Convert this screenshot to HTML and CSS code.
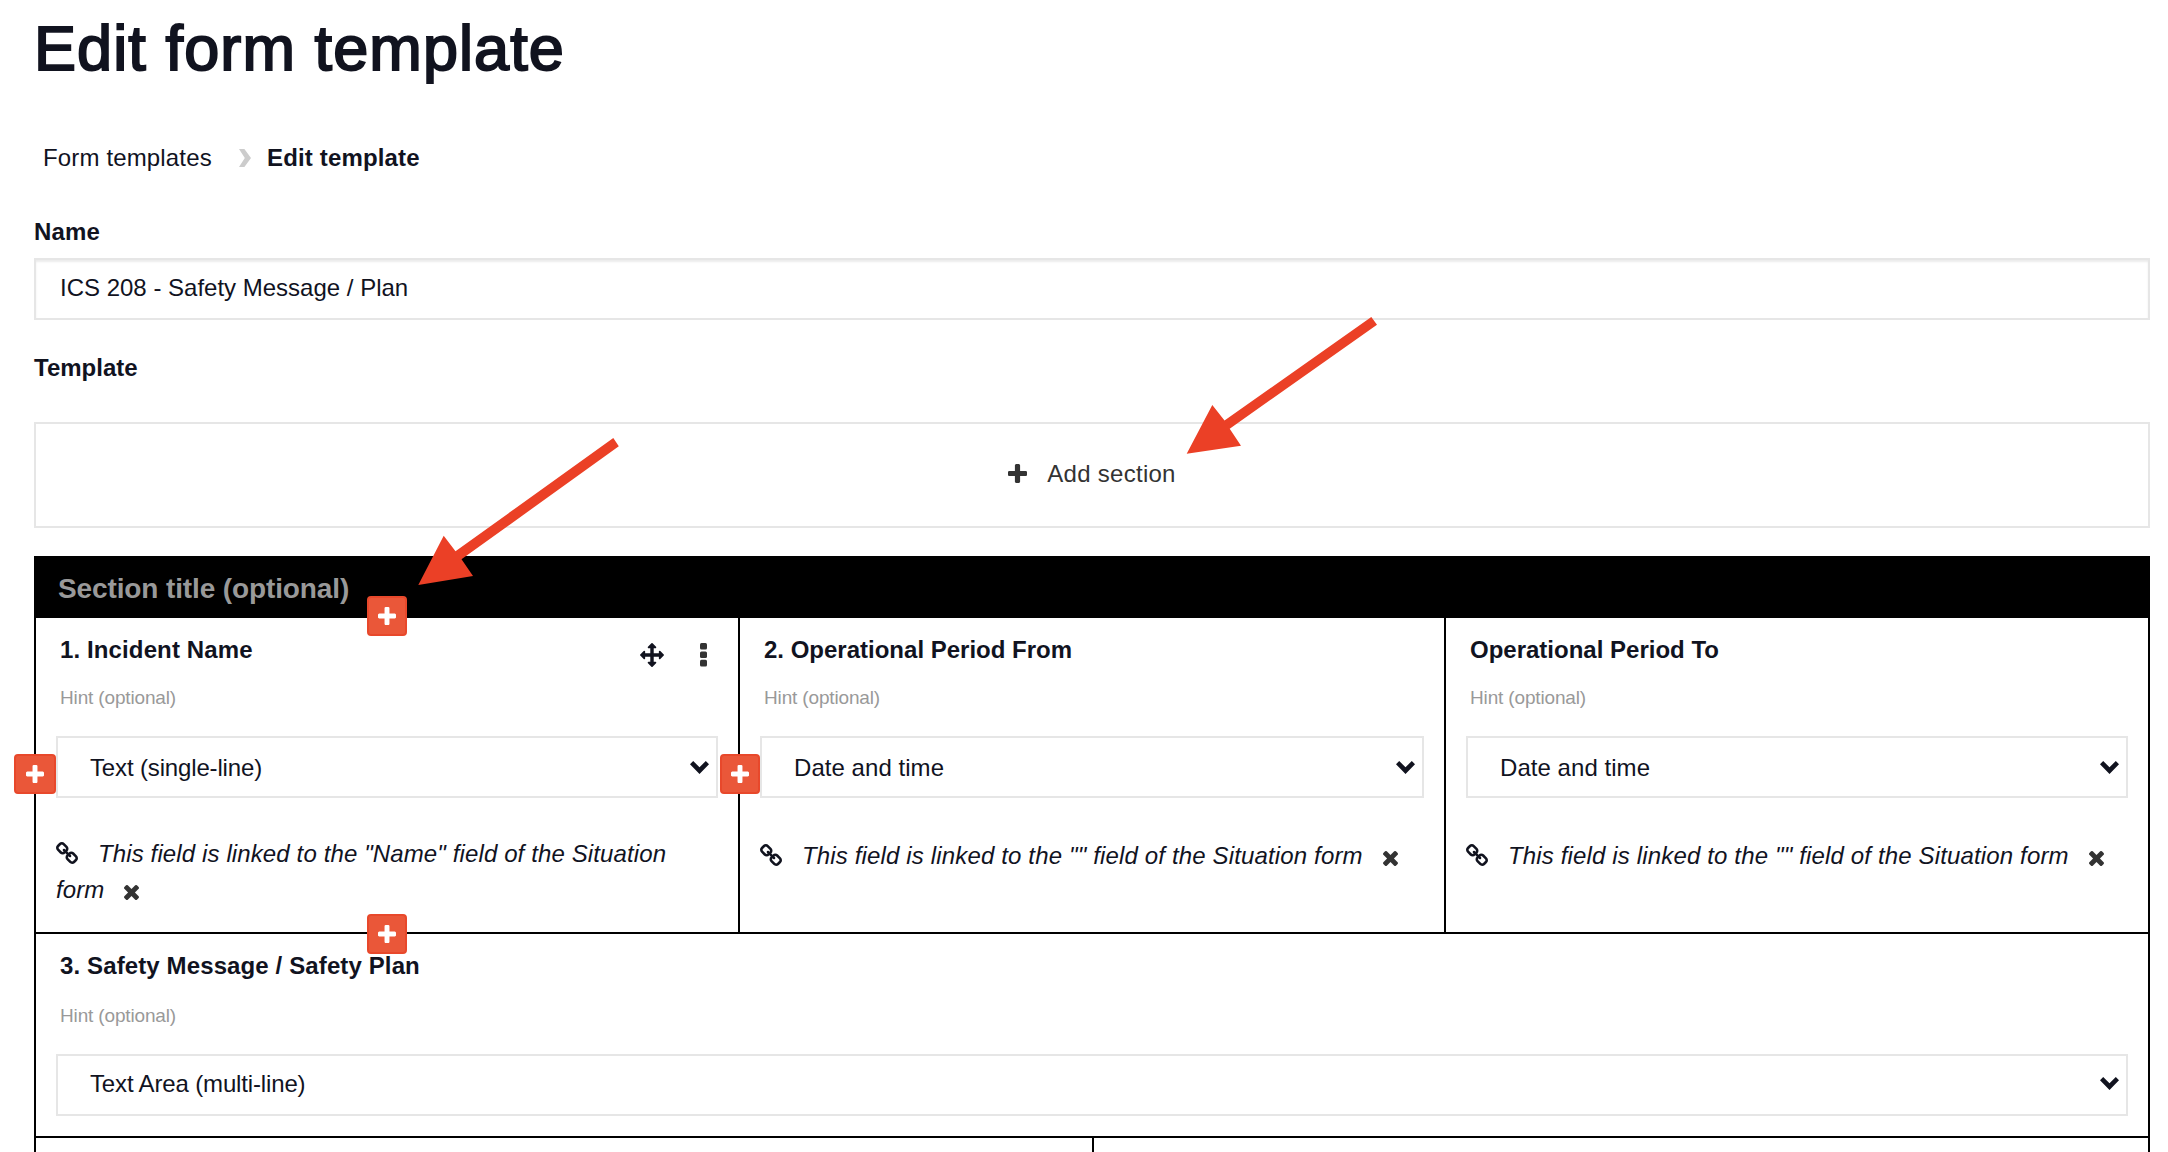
FILE: index.html
```
<!DOCTYPE html>
<html lang="en">
<head>
<meta charset="utf-8">
<title>Edit form template</title>
<link rel="stylesheet" href="styles.css">
</head>
<body>
<svg class="sprite" aria-hidden="true">
  <symbol id="plus" viewBox="192 128 1408 1408"><path d="M1600 736v192q0 40-28 68t-68 28h-416v416q0 40-28 68t-68 28h-192q-40 0-68-28t-28-68v-416h-416q-40 0-68-28t-28-68v-192q0-40 28-68t68-28h416v-416q0-40 28-68t68-28h192q40 0 68 28t28 68v416h416q40 0 68 28t28 68z"/></symbol>
  <symbol id="times" viewBox="302 366 1188 1188"><path d="M1490 1322q0 40-28 68l-136 136q-28 28-68 28t-68-28l-294-294-294 294q-28 28-68 28t-68-28l-136-136q-28-28-28-68t28-68l294-294-294-294q-28-28-28-68t28-68l136-136q28-28 68-28t68 28l294 294 294-294q28-28 68-28t68 28l136 136q28 28 28 68t-28 68l-294 294 294 294q28 28 28 68z"/></symbol>
  <symbol id="move" viewBox="0 0 1792 1792"><path d="M1792 896q0 26-19 45l-256 256q-19 19-45 19t-45-19-19-45v-128h-384v384h128q26 0 45 19t19 45-19 45l-256 256q-19 19-45 19t-45-19l-256-256q-19-19-19-45t19-45 45-19h128v-384h-384v128q0 26-19 45t-45 19-45-19l-256-256q-19-19-19-45t19-45l256-256q19-19 45-19t45 19 19 45v128h384v-384h-128q-26 0-45-19t-19-45 19-45l256-256q19-19 45-19t45 19l256 256q19 19 19 45t-19 45-45 19h-128v384h384v-128q0-26 19-45t45-19 45 19l256 256q19 19 19 45z"/></symbol>
  <symbol id="link" viewBox="80 16 1632 1632"><path d="M1520 1216q0-40-28-68l-208-208q-28-28-68-28-42 0-72 32 3 3 19 18.5t21.5 21.5 15 19 13 25.5 3.5 27.5q0 40-28 68t-68 28q-15 0-27.5-3.5t-25.5-13-19-15-21.5-21.5-18.5-19q-33 31-33 73 0 40 28 68l206 207q27 27 68 27 40 0 68-26l147-146q28-28 28-67zm-703-705q0-40-28-68l-206-207q-28-28-68-28-39 0-68 27l-147 146q-28 28-28 67 0 40 28 68l208 208q27 27 68 27 42 0 72-31-3-3-19-18.5t-21.5-21.5-15-19-13-25.5-3.5-27.5q0-40 28-68t68-28q15 0 27.5 3.5t25.5 13 19 15 21.5 21.5 18.5 19q33-31 33-73zm895 705q0 120-85 203l-147 146q-83 83-203 83-121 0-204-85l-206-207q-83-83-83-203 0-123 88-209l-88-88q-86 88-208 88-120 0-204-84l-208-208q-84-84-84-204t85-203l147-146q83-83 203-83 121 0 204 85l206 207q83 83 83 203 0 123-88 209l88 88q86-88 208-88 120 0 204 84l208 208q84 84 84 204z"/></symbol>
  <symbol id="down" viewBox="0 0 19 13"><path d="M0 3.2 3.2 0 9.5 6.2 15.8 0 19 3.2 9.5 13z"/></symbol>
  <symbol id="dots" viewBox="0 0 7 24"><rect width="7" height="6.6" rx="1.5"/><rect y="8.4" width="7" height="6.6" rx="1.5"/><rect y="16.8" width="7" height="6.6" rx="1.5"/></symbol>
</svg>

<main class="page">
  <h1 class="page-title">Edit form template</h1>

  <nav class="breadcrumb">
    <a class="crumb">Form templates</a>
    <svg class="crumb-sep" viewBox="0 0 12 18"><path d="M0 0h5.400L12 9l-6.600 9H0l5.800-9z"/></svg>
    <span class="crumb-current">Edit template</span>
  </nav>

  <label class="label" for="name">Name</label>
  <input class="text-input" id="name" type="text" value="ICS 208 - Safety Message / Plan">

  <div class="label label-template">Template</div>
  <div class="add-section"><svg class="add-icon"><use href="#plus"/></svg><span>Add section</span></div>

  <section class="section">
    <header class="section-head">Section title (optional)</header>

    <div class="row row-three">
      <div class="cell">
        <div class="cell-head">
          <span class="cell-title">1. Incident Name</span>
          <span class="cell-tools"><svg class="move"><use href="#move"/></svg><svg class="dots"><use href="#dots"/></svg></span>
        </div>
        <div class="hint">Hint (optional)</div>
        <div class="select"><span class="select-tight">Text (single-line)</span><svg class="down"><use href="#down"/></svg></div>
        <p class="linked"><svg class="link"><use href="#link"/></svg>This field is linked to the "Name" field of the Situation form<svg class="times"><use href="#times"/></svg></p>
        <button class="add add-top"><svg><use href="#plus"/></svg></button>
        <button class="add add-left"><svg><use href="#plus"/></svg></button>
        <button class="add add-right"><svg><use href="#plus"/></svg></button>
        <button class="add add-bottom"><svg><use href="#plus"/></svg></button>
      </div>
      <div class="cell">
        <div class="cell-head"><span class="cell-title">2. Operational Period From</span></div>
        <div class="hint">Hint (optional)</div>
        <div class="select"><span>Date and time</span><svg class="down"><use href="#down"/></svg></div>
        <p class="linked linked-short"><svg class="link"><use href="#link"/></svg>This field is linked to the "" field of the Situation form<svg class="times"><use href="#times"/></svg></p>
      </div>
      <div class="cell">
        <div class="cell-head"><span class="cell-title">Operational Period To</span></div>
        <div class="hint">Hint (optional)</div>
        <div class="select"><span>Date and time</span><svg class="down"><use href="#down"/></svg></div>
        <p class="linked linked-short"><svg class="link"><use href="#link"/></svg>This field is linked to the "" field of the Situation form<svg class="times"><use href="#times"/></svg></p>
      </div>
    </div>

    <div class="row row-one">
      <div class="cell">
        <div class="cell-head"><span class="cell-title">3. Safety Message / Safety Plan</span></div>
        <div class="hint">Hint (optional)</div>
        <div class="select"><span class="select-tight">Text Area (multi-line)</span><svg class="down"><use href="#down"/></svg></div>
      </div>
    </div>

    <div class="row row-two">
      <div class="cell"></div>
      <div class="cell"></div>
    </div>
  </section>
</main>

<svg class="callouts" viewBox="0 0 2168 1152">
  <path d="M613.300 438 618.800 446.300 461.500 559.300 473 576 418.300 585 443.700 535.700 455.500 551.300z"/>
  <path d="M1371.300 317 1377 324.700 1229.700 428.700 1241 445.700 1186.700 453.700 1212.300 405 1224.500 420.500z"/>
</svg>
</body>
</html>
```
FILE: styles.css
```
* { box-sizing: border-box; }

body {
  margin: 0;
  height: 1152px;
  overflow: hidden;
  position: relative;
  background: #fff;
  color: #11131f;
  font: 24px/36px "Liberation Sans", Arial, sans-serif;
  letter-spacing: 0.12px;
}

svg { display: block; fill: currentColor; }
.sprite { position: absolute; width: 0; height: 0; }

.page { padding: 0 18px 0 34px; }

.page-title {
  margin: 0;
  padding: 12px 0 0;
  height: 140px;
  font-size: 63px;
  line-height: 72px;
  font-weight: 400;
  letter-spacing: 1.1px;
  -webkit-text-stroke: 2px currentColor;
}

.breadcrumb {
  display: flex;
  align-items: flex-start;
  height: 74px;
  padding-left: 9px;
  letter-spacing: 0.15px;
}
.crumb { width: 197px; }
.crumb-sep { width: 12px; height: 18px; margin: 9px 16px 0 -1px; color: #ccc; }
.crumb-current { font-weight: 700; }

.label { display: block; height: 44px; font-weight: 700; }
.label-template { height: 72px; margin-top: 30px; letter-spacing: 0; }

.text-input {
  display: block;
  width: 100%;
  height: 62px;
  padding: 0 24px 2px;
  border: 2px solid #e6e6e6;
  border-radius: 0;
  box-shadow: inset 0 2px 2px #ececec;
  outline: 0;
  font: inherit;
  letter-spacing: 0;
  color: inherit;
}

.add-section {
  display: flex;
  justify-content: center;
  align-items: center;
  gap: 20px;
  height: 106px;
  padding-bottom: 3px;
  border: 2px solid #e6e6e6;
  color: #333;
  letter-spacing: 0.28px;
}
.add-icon { width: 19px; height: 19px; }

.section { margin-top: 28px; border: solid #000; border-width: 0 2px; }
.section-head {
  height: 62px;
  margin: 0 -2px;
  padding: 15px 24px 0;
  background: #000;
  color: #999;
  font-size: 28px;
  font-weight: 700;
  letter-spacing: -0.12px;
}

.row { display: grid; border-bottom: 2px solid #000; }
.row-three { grid-template-columns: 704px 706px 702px; height: 316px; }
.row-one { height: 204px; }
.row-two { grid-template-columns: 1058px 1fr; height: 14px; border-bottom: 0; }

.cell { position: relative; padding: 14px 20px 0; border-right: 2px solid #000; }
.cell:last-child { border-right: 0; }
.row-two .cell { padding: 0; }
.cell-head { display: flex; justify-content: space-between; height: 46px; padding-left: 4px; }
.cell-title { font-weight: 700; }
.cell + .cell .cell-title { letter-spacing: 0; }
.cell-tools { display: flex; gap: 36px; padding: 11px 11px 0 0; }
.move { width: 24px; height: 24px; }
.dots { width: 7px; height: 24px; color: #333; }
.hint { height: 58px; padding: 2px 0 0 4px; font-size: 19px; color: #999; letter-spacing: -0.15px; }
.row-one .hint { height: 60px; padding-top: 4px; }

.select {
  display: flex;
  justify-content: space-between;
  height: 62px;
  padding: 12px 7px 0 32px;
  border: 2px solid #e6e6e6;
  letter-spacing: 0.05px;
}
.select-tight { letter-spacing: -0.15px; }
.row-one .select { padding-top: 10px; }
.down { width: 19px; height: 13px; margin-top: 11px; }

.linked { margin: 38px 0 0; font-style: italic; line-height: 36px; }
.linked-short { margin-top: 40px; letter-spacing: 0.15px; }
.linked svg { display: inline-block; }
.link { width: 22px; height: 22px; margin-right: 20px; vertical-align: -2px; }
.times { width: 15px; height: 15px; margin-left: 20px; vertical-align: -2px; color: #333; }

.add {
  position: absolute;
  display: grid;
  place-items: center;
  width: 40px;
  height: 40px;
  padding: 0 0 1px;
  border: 2px solid #e8482b;
  border-radius: 4px;
  background: #ea5739;
  color: #fff;
}
.add svg { width: 18px; height: 18px; }
.add-top { left: 331px; top: -22px; }
.add-bottom { left: 331px; top: 296px; }
.add-left { left: -22px; top: 136px; width: 42px; }
.add-right { left: 684px; top: 136px; z-index: 1; }

.callouts { position: absolute; inset: 0; width: 2168px; height: 1152px; color: #eb4026; pointer-events: none; }
```
